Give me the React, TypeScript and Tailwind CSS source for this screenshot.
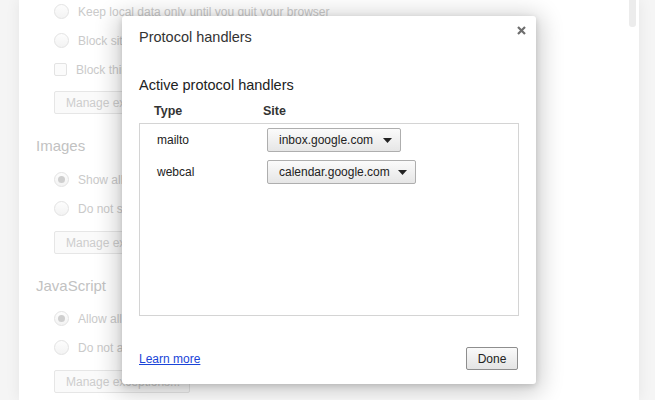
const FONT = { fontFamily: '"Liberation Sans", Arial, sans-serif' };

function Radio({ checked = false }: { checked?: boolean }) {
  return (
    <span className="flex h-[15px] w-[15px] shrink-0 items-center justify-center rounded-full border border-[#e3e3e3] bg-gradient-to-b from-[#fdfdfd] to-[#f3f3f3]">
      {checked && <span className="h-[7px] w-[7px] rounded-full bg-[#cfcfcf]" />}
    </span>
  );
}

function Option({ label, checked, box }: { label: string; checked?: boolean; box?: boolean }) {
  return (
    <div className="flex h-[29px] items-center gap-[9px] pl-[18px]">
      {box ? (
        <span className="h-[13px] w-[13px] shrink-0 rounded-[2px] border border-[#e3e3e3] bg-[#fbfbfb]" />
      ) : (
        <Radio checked={checked} />
      )}
      <span className="whitespace-nowrap text-[12px] text-[#cacaca]">{label}</span>
    </div>
  );
}

function ManageButton() {
  return (
    <div className="ml-[18px] flex h-[23px] w-[136px] items-center overflow-hidden whitespace-nowrap rounded-[2px] border border-[#e6e6e6] bg-[#fafafa] pl-[11px] text-[12px] text-[#cdcdcd]">
      Manage exceptions...
    </div>
  );
}

function SiteSelect({ value, width }: { value: string; width: string }) {
  return (
    <div
      className={`flex h-[24px] items-center justify-between rounded-[2px] border border-[#aeaeae] bg-gradient-to-b from-[#fbfbfb] to-[#e6e6e6] pl-[11px] pr-[8px] text-[12px] text-[#222] ${width}`}
    >
      <span>{value}</span>
      <svg width="9" height="5" viewBox="0 0 9 5">
        <path d="M0 0h9L4.5 5z" fill="#222" />
      </svg>
    </div>
  );
}

const HANDLERS = [
  { type: "mailto", site: "inbox.google.com", width: "w-[134px]" },
  { type: "webcal", site: "calendar.google.com", width: "w-[149px]" },
];

export default function App() {
  return (
    <div className="relative h-[400px] w-[655px] overflow-hidden bg-[#f5f5f5]" style={FONT}>
      <div className="flex h-full">
        <div className="w-[19px] shrink-0" />
        <div className="relative h-full w-[620px] shrink-0 bg-white pl-[17px] shadow-[0_0_14px_rgba(0,0,0,0.07)]">
          <div className="-mt-[3px] flex flex-col">
            <Option label="Keep local data only until you quit your browser" />
            <Option label="Block sites from setting any data" />
            <Option label="Block third-party cookies and site data" box />
            <div className="mt-[7px]">
              <ManageButton />
            </div>
            <div className="mt-[22px] flex h-[20px] items-center text-[15px] text-[#c2c2c2]">Images</div>
            <div className="mt-[9px]">
              <Option label="Show all images (recommended)" checked />
              <Option label="Do not show any images" />
            </div>
            <div className="mt-[8px]">
              <ManageButton />
            </div>
            <div className="mt-[22px] flex h-[20px] items-center text-[15px] text-[#c2c2c2]">JavaScript</div>
            <div className="mt-[8px]">
              <Option label="Allow all sites to run JavaScript (recommended)" checked />
              <Option label="Do not allow any site to run JavaScript" />
            </div>
            <div className="mt-[8px]">
              <ManageButton />
            </div>
          </div>
          <div className="absolute right-[3px] top-0 h-[27px] w-[7px] rounded-b-[3px] bg-[#ececec]" />
        </div>
        <div className="flex-1" />
      </div>

      <div className="absolute left-[122px] top-[16px] flex h-[368px] w-[414px] flex-col rounded-[3px] bg-white pl-[17px] pr-[17px] shadow-[0_4px_23px_5px_rgba(0,0,0,0.2),0_2px_6px_rgba(0,0,0,0.15)]">
        <button className="absolute right-[10px] top-[10px] flex h-[9px] w-[9px] items-center justify-center">
          <svg width="9" height="9" viewBox="0 0 9 9">
            <path d="M1 1l7 7M8 1L1 8" stroke="#6e6e6e" strokeWidth="2.2" />
          </svg>
        </button>
        <h1 className="mt-[12px] h-[18px] text-[14.5px] leading-[18px] text-[#333]">Protocol handlers</h1>
        <h2 className="mt-[30px] h-[18px] text-[14.5px] leading-[18px] text-[#222]">Active protocol handlers</h2>
        <div className="mt-[9px] flex h-[16px] text-[12.5px] font-bold leading-[16px] text-[#333]">
          <span className="w-[124px] pl-[15px]">Type</span>
          <span>Site</span>
        </div>
        <div className="mt-[4px] flex h-[193px] w-[380px] flex-col gap-[8px] border border-[#d4d4d4] pt-[4px]">
          {HANDLERS.map((h) => (
            <div key={h.type} className="flex h-[24px] items-center">
              <span className="w-[127px] pl-[17px] text-[12px] text-[#222]">{h.type}</span>
              <SiteSelect value={h.site} width={h.width} />
            </div>
          ))}
        </div>
        <div className="mt-auto mb-[14px] flex items-center justify-between">
          <a href="#" className="text-[12px] text-[#1a44d8] underline">
            Learn more
          </a>
          <button className="mr-[1px] h-[23px] w-[52px] rounded-[2px] border border-[#8e8e8e] bg-gradient-to-b from-[#fafafa] to-[#e4e4e4] text-[12px] text-[#222]">
            Done
          </button>
        </div>
      </div>
    </div>
  );
}
